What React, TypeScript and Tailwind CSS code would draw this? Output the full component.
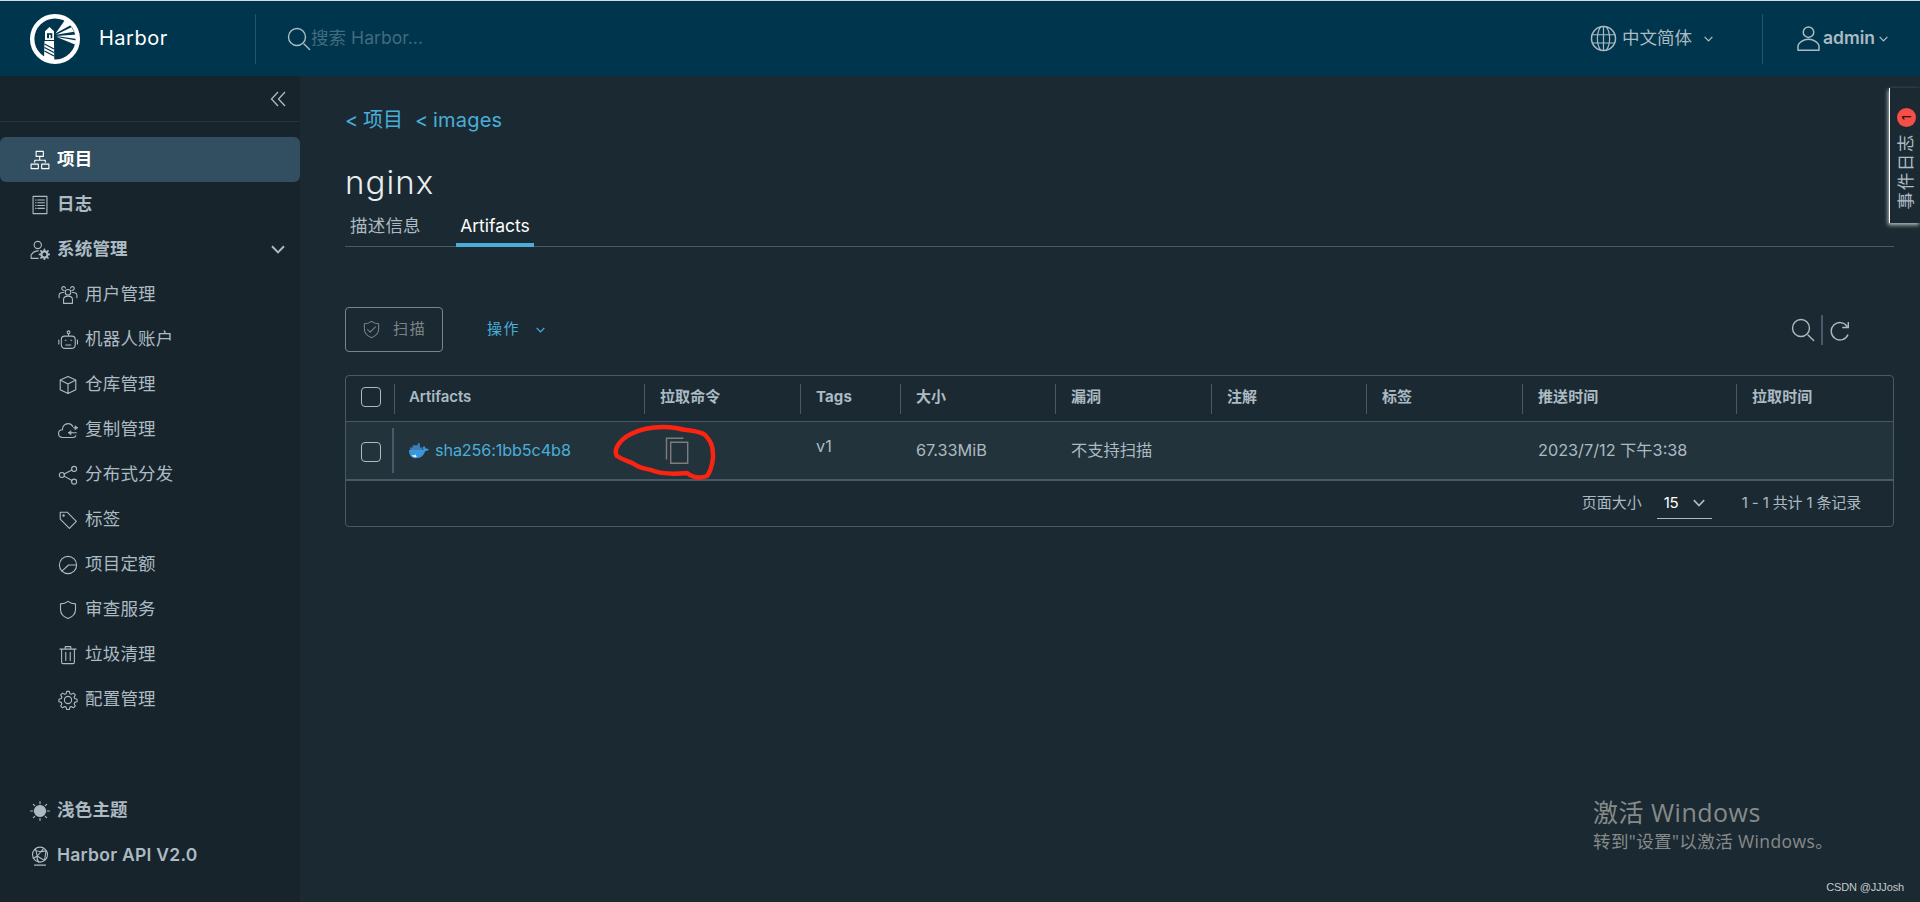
import type { ReactNode } from 'react';

type IconProps = { children: ReactNode; className?: string };

// Clarity-style outline icons on a 36 unit grid
function Icon({ children, className = 'size-5' }: IconProps) {
  return (
    <svg
      viewBox="0 0 36 36"
      className={`shrink-0 ${className}`}
      fill="none"
      stroke="currentColor"
      strokeWidth="2"
      strokeLinecap="round"
      strokeLinejoin="round"
    >
      {children}
    </svg>
  );
}

const Chevron = ({ className }: { className: string }) => (
  <svg viewBox="0 0 14 9" className={`shrink-0 ${className}`} fill="none" stroke="currentColor" strokeWidth="2">
    <path d="M1 1.2 7 7.4 13 1.2" />
  </svg>
);

const SearchIcon = () => (
  <svg viewBox="0 0 24 24" className="size-6 shrink-0" fill="none" stroke="currentColor" strokeWidth="1.4" strokeLinecap="round">
    <circle cx="10" cy="10" r="8.5" />
    <path d="m17 17 5.6 5.4" />
  </svg>
);

const icons = {
  projects: (
    <Icon>
      <path d="M11 2.500h13v9H11zM2 25.500h13v8H2zM21 25.500h13v8H21zM17.500 12v6M8.500 22v-3.500h19V22" />
    </Icon>
  ),
  logs: (
    <Icon>
      <path d="M5.500 2.500h25v31h-25zM10 9h1M10 14h1M10 19h1M10 24h1M14 9h12M14 14h12M14 19h12M14 24h12" />
    </Icon>
  ),
  admin: (
    <Icon>
      <circle cx="14" cy="9" r="6.500" />
      <path d="M15 33H2v-6c3-5 7-7.500 13-7.500" />
      <circle cx="26" cy="26" r="5.500" strokeWidth="4" />
      <path d="M26 17v3M26 32v3M17 26h3M32 26h3M19.600 19.600l2 2M30.400 30.400l2 2M19.600 32.400l2-2M30.400 21.600l2-2" strokeWidth="3" />
    </Icon>
  ),
  users: (
    <Icon>
      <circle cx="18" cy="13" r="5" />
      <path d="M10 33v-7c0-4 4-6 8-6s8 2 8 6v7zM11 10C6 10 5 3 10 3c2 0 3 1 3.500 2.500M25 10c5 0 6-7 1-7-2 0-3 1-3.500 2.500M2 23v-5c0-3 4-5 8-4.500M34 23v-5c0-3-4-5-8-4.500" />
    </Icon>
  ),
  robot: (
    <Icon>
      <circle cx="19" cy="4" r="2.500" />
      <path d="M19 7v4M12 11h13c4 0 6 2 6 6v9c0 4-3 7-7 7H13c-4 0-7-3-7-7v-9c0-4 2-6 6-6zM1.500 18v7M35 18v7M14 27h9M13 18.500h1.500M23 18.500h1.500" />
    </Icon>
  ),
  registry: (
    <Icon>
      <path d="M18 2.500 32 9v17.500L18 33.500 4 26.500V9zM4 9l14 7 14-7M18 16v17" />
    </Icon>
  ),
  replication: (
    <Icon>
      <path d="M32 28c-.5 2.500-2 3.500-5 3.500H8c-4 0-7-3-7-7 0-4 3-7 7-7 0-6 4-11 10-11 4 0 7 2 8.500 5M19 23h14M28 14h7" />
      <path d="m23 19.500-4.500 3.500 4.500 3.500zM31 10.500l4.500 3.500-4.500 3.500z" fill="currentColor" strokeWidth="1" />
    </Icon>
  ),
  distribution: (
    <Icon>
      <circle cx="7" cy="18" r="4.500" />
      <circle cx="29" cy="7" r="4.500" />
      <circle cx="29" cy="30" r="4.500" />
      <path d="m11 16 14-7M11 20l14 8" />
    </Icon>
  ),
  labels: (
    <Icon>
      <path d="M4 4h12.500L33 20.500 20.500 33 4 16.500z" />
      <circle cx="10" cy="10" r="1.200" />
    </Icon>
  ),
  quotas: (
    <Icon>
      <circle cx="18" cy="18" r="15.500" />
      <path d="M33 18H19L7 29" />
    </Icon>
  ),
  shield: (
    <Icon>
      <path d="M18 2.500c5 4 9 4.500 13.500 4.500v10c0 8-5 13-13.500 16.500C9.500 30 4.500 25 4.500 17V7C9 7 13 6.500 18 2.500z" />
    </Icon>
  ),
  trash: (
    <Icon>
      <path d="M3.500 7.500h29M6.500 8v23c0 1.500 1 2.500 2.500 2.500h18c1.500 0 2.500-1 2.500-2.500V8M13 7V3h10v4M14 13v15M22 13v15" />
    </Icon>
  ),
  gear: (
    <Icon>
      <circle cx="18" cy="18" r="6.500" />
      <path d="m15.700 2.500h4.600l1.200 4.300 2.500 1 3.900-2.200 3.300 3.300-2.200 3.900 1 2.500 4.300 1.200v4.600l-4.300 1.200-1 2.500 2.200 3.900-3.300 3.300-3.900-2.200-2.500 1-1.200 4.300h-4.600l-1.200-4.300-2.500-1-3.900 2.200-3.300-3.300L7 24.800l-1-2.500-4.300-1.200v-4.600L6 15.300l1-2.500-2.200-3.900 3.300-3.300L12 7.800l2.500-1z" />
    </Icon>
  ),
  sun: (
    <Icon>
      <circle cx="18" cy="18" r="10" fill="currentColor" />
      <path d="M18 1v4M18 31v4M1 18h4M31 18h4M6 6l2.500 2.500M27.500 27.500 30 30M6 30l2.500-2.500M27.500 8.500 30 6" />
    </Icon>
  ),
  api: (
    <Icon>
      <circle cx="18" cy="15.500" r="13.500" />
      <path d="M8 34.500h20M8 7c7 4 14 4 21 1M24 5 13 18l13 8M10 5l3 13-7 4M29 8c-1 7-2 12-3 18M13 18c-1 5 0 8 3 11" />
    </Icon>
  ),
};

const adminItems = [
  { label: '用户管理', icon: icons.users },
  { label: '机器人账户', icon: icons.robot },
  { label: '仓库管理', icon: icons.registry },
  { label: '复制管理', icon: icons.replication },
  { label: '分布式分发', icon: icons.distribution },
  { label: '标签', icon: icons.labels },
  { label: '项目定额', icon: icons.quotas },
  { label: '审查服务', icon: icons.shield },
  { label: '垃圾清理', icon: icons.trash },
  { label: '配置管理', icon: icons.gear },
];

function HarborLogo() {
  return (
    <svg viewBox="0 0 50 50" className="size-[50px] shrink-0">
      <circle cx="25" cy="25" r="22.800" fill="none" stroke="#fff" strokeWidth="4.400" />
      <path
        fill="#fff"
        d="M19.500 13 24 17.200V26h-9v-8.800zM14.500 27h9.500l.3 21.500-10.300-2.500zM25.500 19.500 35 6l6 5zM26 20.800l15.500-7.500 2.500 4.500zM26 22l21-1.500v4.500zM26.500 23l20 3.500-1.500 4z"
      />
      <path fill="#00364d" d="M17 19.200h5.300v5H17z" />
      <path fill="#fff" d="M19 20.800h1.600v3.400H19z" />
      <path stroke="#00364d" strokeWidth="1.200" d="m14.500 30 9.500 5M14.500 33.500l9.500 5M14.500 37l9.500 5" />
    </svg>
  );
}

function Header() {
  return (
    <header className="flex h-[76px] shrink-0 items-center border-t border-[#d5dde0] bg-[#00364d] text-[#acbac3]">
      <div className="flex w-[255px] items-center pl-[30px]">
        <HarborLogo />
        <span className="ml-[19px] pb-px text-[20px] tracking-[0.5px] text-white">Harbor</span>
      </div>
      <div className="h-[50px] w-px bg-[#23566b]" />
      <div className="ml-[31px] flex items-center">
        <SearchIcon />
        <span className="text-[17.5px] tracking-[0.05px] text-[#426b7e]">搜索 Harbor...</span>
      </div>
      <div className="ml-auto flex items-center">
        <Icon className="size-[27px]">
          <circle cx="18" cy="18" r="16" />
          <path d="M3 13h30M3 24h30M18 2v32M14 2.500C8.500 11 8.500 25 14 33.500M22 2.500c5.500 8.500 5.500 22.500 0 31" strokeWidth="1.600" />
        </Icon>
        <span className="ml-[5px] text-[17.5px]">中文简体</span>
        <Chevron className="ml-3 h-1.5 w-[9px]" />
      </div>
      <div className="ml-[49px] h-[50px] w-px bg-[#23566b]" />
      <div className="flex w-[157px] items-center pl-8">
        <Icon className="size-[27px]">
          <circle cx="18" cy="9.500" r="7" />
          <path d="M4 33.500v-6c1-4 7-8.500 14-8.500s13 4.500 14 8.500v6z" />
        </Icon>
        <span className="ml-px text-[17.5px] font-semibold">admin</span>
        <Chevron className="ml-[4px] h-1.5 w-[9px]" />
      </div>
    </header>
  );
}

function Sidebar() {
  return (
    <nav className="flex w-[300px] shrink-0 flex-col bg-[#17242b] text-[17.5px] text-[#acbac3]">
      <div className="flex h-[46px] items-center justify-end border-b border-[#22333b] pt-px pr-[14px]">
        <svg viewBox="0 0 16 16" className="size-4" fill="none" stroke="currentColor" strokeWidth="1.300">
          <path d="M8 1 1.500 8 8 15M15 1 8.500 8l6.500 7" />
        </svg>
      </div>
      <div className="mt-[15px] flex h-[45px] items-center rounded-md bg-[#324f62] pl-[30px] font-bold text-white">
        {icons.projects}
        <span className="ml-[7px] tracking-[0.2px]">项目</span>
      </div>
      <div className="flex h-[45px] items-center pl-[30px] font-bold">
        {icons.logs}
        <span className="ml-[7px] tracking-[0.2px]">日志</span>
      </div>
      <div className="flex h-[45px] items-center pr-[15px] pl-[30px] font-bold">
        {icons.admin}
        <span className="ml-[7px] tracking-[0.2px]">系统管理</span>
        <Chevron className="ml-auto h-[9px] w-[14px]" />
      </div>
      {adminItems.map((item) => (
        <div key={item.label} className="flex h-[45px] items-center pl-[58px]">
          <span className="pt-px">{item.icon}</span>
          <span className="ml-[7px] pb-px tracking-[0.2px]">{item.label}</span>
        </div>
      ))}
      <div className="mt-auto flex h-[45px] items-center pl-[30px] font-bold">
        {icons.sun}
        <span className="ml-[7px] tracking-[0.2px]">浅色主题</span>
      </div>
      <div className="mb-6 flex h-[45px] items-center pl-[30px] font-semibold">
        {icons.api}
        <span className="ml-[7px] tracking-[0.25px]">Harbor API V2.0</span>
      </div>
    </nav>
  );
}

const columns = [
  { title: 'Artifacts', width: 'w-[250px] pl-[14px]' },
  { title: '拉取命令', width: 'w-[156px] pl-[15px]' },
  { title: 'Tags', width: 'w-[100px] pl-[15px]' },
  { title: '大小', width: 'w-[155px] pl-[15px]' },
  { title: '漏洞', width: 'w-[156px] pl-[15px]' },
  { title: '注解', width: 'w-[155px] pl-[15px]' },
  { title: '标签', width: 'w-[156px] pl-[15px]' },
  { title: '推送时间', width: 'w-[214px] pl-[15px]' },
  { title: '拉取时间', width: 'w-[156px] pl-[15px]' },
];

const Checkbox = () => <div className="size-5 rounded-[4px] border border-[#acbac3]" />;

function DockerWhale() {
  return (
    <svg viewBox="0 0 20 16" className="h-4 w-5 shrink-0">
      <path fill="#3b97d9" d="M0 7h14.500c-.8-1.500-.5-3 .3-4 1.200.8 1.700 1.700 1.700 2.700 1.200-.3 2.500-.1 3.300.5-.6 1.300-2 1.900-3.500 1.900C14.500 13 11.500 15.300 7 15.300 2.500 15.300 0 12.500 0 7z" />
      <path fill="#3a80b8" d="M1.200 4.500h12.200V7H1.200zM3.700 2.300h7.200v2.300H3.700zM8.700.2h2.200v2.200H8.700z" />
      <path fill="#e6eef3" d="M2.500 12.300c1.500.2 3-.1 4.200-.9.200 1 .5 1.800 1.200 2.600-2 .4-4.200 0-5.400-1.700z" />
    </svg>
  );
}

function ArtifactTable() {
  return (
    <section className="relative mt-[23px] w-[1549px] rounded-[4px] border border-[#485969] text-[16.25px]">
      <div className="flex h-[46px] items-center border-b border-[#485969] text-[15px] font-bold">
        <div className="flex w-12 pb-[3px] pl-[15px]">
          <Checkbox />
        </div>
        {columns.map((col) => (
          <div key={col.title} className={`flex h-[30px] items-center border-l border-[#485969] pb-0.5 tracking-[0.1px] ${col.width}`}>
            {col.title === 'Artifacts' ? <span className="font-semibold tracking-[-0.05px]">{col.title}</span> : col.title}
          </div>
        ))}
      </div>

      <div className="flex h-[59px] items-center border-b-2 border-[#485969] bg-[#22333b]">
        <div className="flex w-[46px] pt-0.5 pl-[15px]">
          <Checkbox />
        </div>
        <div className="flex h-[45px] w-[271px] items-center border-l-2 border-[#485969] pl-[15px] text-[#4aaed9]">
          <DockerWhale />
          <span className="ml-1.5 tracking-[-0.15px]">sha256:1bb5c4b8</span>
        </div>
        <div className="w-[153px] pl-[2px] text-[#7d7d7d]">
          <svg viewBox="0 0 24 27" className="h-[27px] w-6" fill="none" stroke="currentColor" strokeWidth="1.400">
            <path d="M5.700 5.200h17v21h-17zM1.500 22.500V1.200h17" />
          </svg>
        </div>
        <div className="w-[100px] pb-2">v1</div>
        <div className="w-[155px]">67.33MiB</div>
        <div className="w-[467px]">不支持扫描</div>
        <div className="w-[214px]">2023/7/12 下午3:38</div>
      </div>

      <div className="flex h-[45px] items-center justify-end pr-8 text-[15px]">
        <span>页面大小</span>
        <div className="ml-[15px] flex h-[31px] w-[55px] items-center border-b border-[#acbac3] pl-[7px] text-white">
          <span className="w-[17px] tracking-[-0.4px]">15</span>
          <Chevron className="ml-[12px] h-2 w-3 text-[#acbac3]" />
        </div>
        <span className="ml-[30px] tracking-[-0.15px]">1 - 1 共计 1 条记录</span>
      </div>

      {/* hand drawn marker around the copy button */}
      <svg viewBox="0 0 110 60" className="absolute top-[48px] left-[265px] h-[60px] w-[110px]" fill="none">
        <path
          d="M6 32C2 26 8 16 20 10 34 3 50 2 65 4 76 7 88 6 94 11 102 19 102 26 102 34 101 43 99 48 96 52 88 55 81 53 76 49 66 50 50 50 40 46 32 44 28 44 23 40 17 37 12 36 6 32"
          stroke="#fb2413"
          strokeWidth="4.500"
          strokeLinecap="round"
          strokeLinejoin="round"
        />
      </svg>
    </section>
  );
}

export default function App() {
  return (
    <div className="relative flex h-[902px] w-[1920px] flex-col overflow-hidden bg-[#1b2a32] text-[#acbac3] [font-family:Inter,'Noto_Sans_CJK_SC',sans-serif]">
      <Header />
      <div className="flex min-h-0 flex-1">
        <Sidebar />
        <main className="flex w-[1594px] flex-col pl-[45px]">
          <div className="mt-[29px] flex h-[30px] items-center text-[20px] text-[#4aaed9]">
            <span className="w-[18px]">&lt;</span>
            <span>项目</span>
            <span className="ml-[12px] w-[18px]">&lt;</span>
            <span className="tracking-[0.2px]">images</span>
          </div>
          <h1 className="mt-[27px] h-10 text-[33px] leading-10 font-light tracking-[1.1px] text-[#eaedf0]">nginx</h1>
          <div className="mt-[3px] flex h-[42px] border-b border-[#485969] text-[17.5px]">
            <div className="flex h-[42px] w-[76px] items-center pl-[5px] tracking-[0.2px]">描述信息</div>
            <div className="ml-[35px] flex h-[42px] w-[78px] items-center justify-center border-b-4 border-[#4aaed9] pt-1 text-white">
              Artifacts
            </div>
          </div>

          <div className="mt-[60px] flex h-[45px] items-center text-[15px] tracking-[1.5px]">
            <button className="flex h-[45px] w-[98px] items-center rounded-[4px] border border-[#7b8388] pl-4 text-[#7b8388]">
              <Icon className="size-[19px]">
                <path d="M18 2.500c5 4 9 4.500 13.500 4.500v10c0 8-5 13-13.500 16.500C9.500 30 4.500 25 4.500 17V7C9 7 13 6.500 18 2.500zM10.500 18l5 5 10-10" />
              </Icon>
              <span className="ml-3 tracking-[1.800px]">扫描</span>
            </button>
            <button className="ml-11 flex items-center text-[#4aaed9]">
              操作
              <Chevron className="ml-4 h-1.5 w-[9px]" />
            </button>
            <div className="ml-auto flex items-center pr-[44px]">
              <SearchIcon />
              <div className="mx-1.5 h-[30px] w-0.5 bg-[#485969]" />
              <svg viewBox="0 0 20 20" className="mt-0.5 ml-px size-5" fill="none" stroke="currentColor" strokeWidth="1.400">
                <path d="M18 13.500A8.700 8.700 0 1 1 17.200 5.500M18.300 1v5.500h-6" />
              </svg>
            </div>
          </div>

          <ArtifactTable />
        </main>
      </div>

      {/* event log drawer handle */}
      <div className="absolute top-[88px] right-0 flex h-[135px] w-[31px] flex-col items-center border-l border-white bg-[#1b2a32] pt-5 shadow-[-1px_2px_4px_#ffffffb0]">
        <div className="ml-[3px] flex size-[19px] shrink-0 -rotate-90 items-center justify-center rounded-full bg-[#f54f47] text-[12px] text-black">
          1
        </div>
        <div className="mt-1.5 ml-px rotate-180 text-[17.5px] leading-5 tracking-[1.6px] [writing-mode:vertical-rl] [text-orientation:sideways]">
          事件日志
        </div>
      </div>

      <div className="absolute top-[795px] left-[1593px] text-[#878a8b] [font-family:'Open_Sans','Noto_Sans_CJK_SC',sans-serif]">
        <div className="text-[25px] leading-[34px] tracking-[0.5px]">激活 Windows</div>
        <div className="text-[17.5px] leading-6 tracking-[0.4px]">转到"设置"以激活 Windows。</div>
      </div>
      <div className="absolute right-4 bottom-[7px] text-[11px] leading-4 tracking-[-0.15px] text-[#c3c9cc] [font-family:'Liberation_Sans',sans-serif]">
        CSDN @JJJosh
      </div>
    </div>
  );
}
